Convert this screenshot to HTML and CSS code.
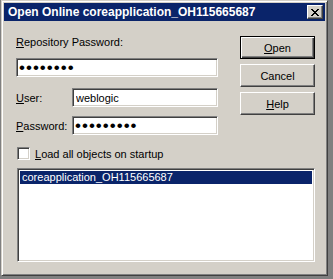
FILE: index.html
```html
<!DOCTYPE html>
<html lang="en">
<head>
  <meta charset="UTF-8">
  <title>Open Online coreapplication_OH115665687</title>
  <link rel="stylesheet" href="styles.css">
</head>
<body>
  <div class="window">
    <div class="titlebar">
      <span class="title">Open Online coreapplication_OH115665687</span>
      <button class="close" type="button" aria-label="Close">
        <svg width="8" height="7" viewBox="0 0 8 7" shape-rendering="crispEdges">
          <path d="M0 0h2v1h-2zM6 0h2v1h-2zM1 1h2v1h-2zM5 1h2v1h-2zM2 2h4v1h-4zM3 3h2v1h-2zM2 4h4v1h-4zM1 5h2v1h-2zM5 5h2v1h-2zM0 6h2v1h-2zM6 6h2v1h-2z" fill="#000"/>
        </svg>
      </button>
    </div>

    <div class="content">
      <div class="top">
        <form class="fields">
          <label class="label-block" for="repoPass"><u>R</u>epository Password:</label>
          <input class="field" type="password" id="repoPass" value="xxxxxxxx">

          <div class="row user-row">
            <label for="user"><u>U</u>ser:</label>
            <input class="field" type="text" id="user" value="weblogic">
          </div>

          <div class="row pass-row">
            <label for="pass"><u>P</u>assword:</label>
            <input class="field" type="password" id="pass" value="xxxxxxxxx">
          </div>
        </form>

        <div class="buttons">
          <button class="btn default" type="button"><u>O</u>pen</button>
          <button class="btn" type="button">Cancel</button>
          <button class="btn" type="button"><u>H</u>elp</button>
        </div>
      </div>

      <!-- Load option -->
      <label class="check"><span class="box"></span><span><u>L</u>oad all objects on startup</span></label>

      <div class="list">
        <div class="item selected">coreapplication_OH115665687</div>
      </div>
    </div>
  </div>
</body>
</html>
```

FILE: styles.css
```css
body {
  margin: 0;
  background: #808080;
  font-family: 'Liberation Sans', Arial, sans-serif;
  font-size: 11px;
  color: #000;
}
u {
  text-decoration: underline;
}
.window {
  width: 327px;
  height: 276px;
  margin-left: 1px;
  box-sizing: border-box;
  background: #d4d0c8;
  border: 1px solid;
  border-color: #d4d0c8 #404040 #404040 #d4d0c8;
  box-shadow: inset 1px 1px #fff, inset -1px -1px #808080;
  padding: 2px;
}
.titlebar {
  height: 18px;
  background: #0a246a;
  display: flex;
  align-items: center;
  justify-content: space-between;
  padding: 0 2px 0 4px;
}
.title {
  color: #fff;
  font-weight: bold;
  font-size: 12px;
}
.close {
  width: 16px;
  height: 14px;
  padding: 0;
  margin: 0;
  background: #d4d0c8;
  border: 1px solid;
  border-color: #fff #404040 #404040 #fff;
  box-shadow: inset -1px -1px #808080;
  display: flex;
  align-items: center;
  justify-content: center;
}
.content {
  padding: 15px 10px 0 12px;
}
.top {
  display: flex;
  justify-content: space-between;
}
.fields {
  width: 202px;
  margin: 0;
}
.label-block {
  display: block;
  height: 13px;
  line-height: 13px;
  margin-bottom: 9px;
}
.field {
  display: block;
  width: 100%;
  height: 19px;
  box-sizing: border-box;
  margin: 0;
  padding: 0 3px;
  background: #fff;
  border: 1px solid;
  border-color: #808080 #fff #fff #808080;
  box-shadow: inset 1px 1px #404040, inset -1px -1px #d4d0c8;
  font-family: inherit;
  font-size: 11px;
  color: #000;
  outline: none;
}
input[type="password"].field {
  font-size: 17px;
  letter-spacing: 1px;
  padding: 0 2px;
}
.row {
  display: flex;
  align-items: center;
}
.row label {
  width: 56px;
  flex: none;
}
.row .field {
  width: 146px;
}
.user-row {
  margin-top: 11px;
}
.pass-row {
  margin-top: 9px;
}
.buttons {
  display: flex;
  flex-direction: column;
  gap: 5px;
}
.btn {
  width: 75px;
  height: 23px;
  margin: 0;
  padding: 0;
  background: #d4d0c8;
  border: 1px solid;
  border-color: #fff #404040 #404040 #fff;
  box-shadow: inset -1px -1px #808080;
  font-family: inherit;
  font-size: 11px;
  color: #000;
}
.btn.default {
  border-color: #000;
  box-shadow: inset 1px 1px #fff, inset -1px -1px #404040, inset -2px -2px #808080;
}
.check {
  display: flex;
  align-items: center;
  gap: 5px;
  height: 13px;
  margin: 12px 0 0 1px;
}
.box {
  width: 13px;
  height: 13px;
  box-sizing: border-box;
  background: #fff;
  border: 1px solid;
  border-color: #808080 #fff #fff #808080;
  box-shadow: inset 1px 1px #404040, inset -1px -1px #d4d0c8;
}
.list {
  margin: 8px 0 0 1px;
  width: 298px;
  height: 94px;
  box-sizing: border-box;
  background: #fff;
  border: 1px solid;
  border-color: #808080 #fff #fff #808080;
  box-shadow: inset 1px 1px #404040, inset -1px -1px #d4d0c8;
  padding: 2px;
}
.item {
  height: 13px;
  line-height: 13px;
  padding-left: 2px;
}
.item.selected {
  background: #0a246a;
  color: #fff;
}
```
